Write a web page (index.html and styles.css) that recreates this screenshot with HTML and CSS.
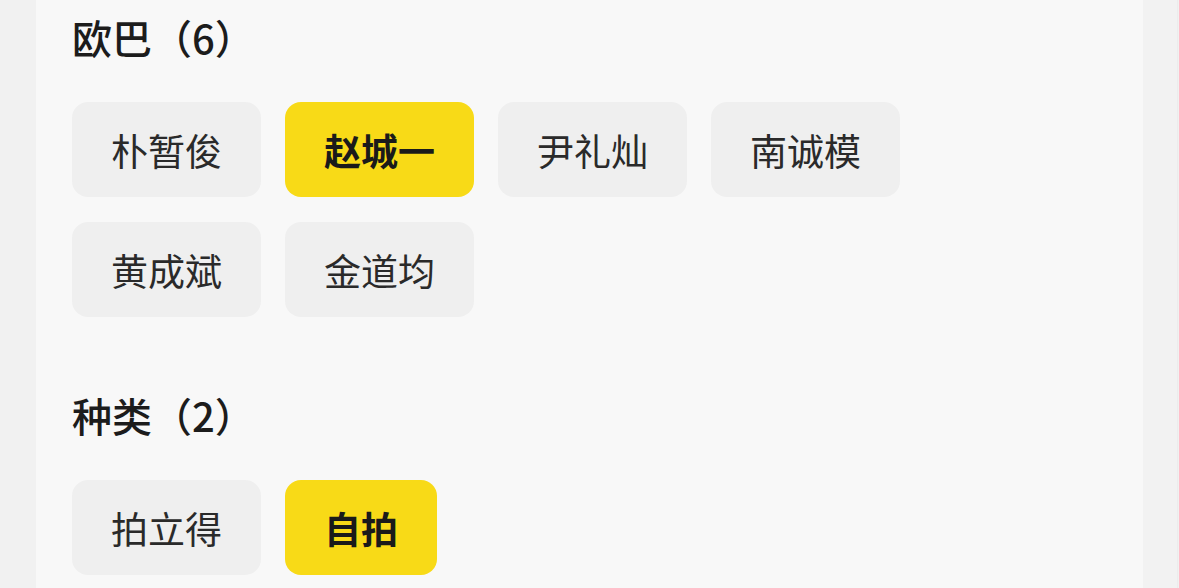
FILE: index.html
```html
<!DOCTYPE html>
<html lang="zh">
<head>
<meta charset="utf-8">
<link rel="stylesheet" href="styles.css">
</head>
<body>
<div class="page">
  <div class="panel">
    <section class="group">
      <h2 class="title">欧巴（6）</h2>
      <div class="chips">
        <span class="chip">朴暂俊</span>
        <span class="chip active">赵城一</span>
        <span class="chip">尹礼灿</span>
        <span class="chip">南诚模</span>
        <span class="chip">黄成斌</span>
        <span class="chip">金道均</span>
      </div>
    </section>
    <section class="group second">
      <h2 class="title">种类（2）</h2>
      <div class="chips">
        <span class="chip">拍立得</span>
        <span class="chip active">自拍</span>
      </div>
    </section>
  </div>
  <div class="edge"></div>
</div>
</body>
</html>
```
FILE: styles.css
```css
html, body {
  margin: 0;
  padding: 0;
  height: 100%;
}
body {
  background: #f1f1f1;
  font-family: "Noto Sans CJK SC", "Noto Sans", sans-serif;
  color: #1c1c1c;
  overflow: hidden;
}
.page {
  display: flex;
  height: 588px;
  padding-left: 36px;
}
.panel {
  width: 1071px;
  background: #f8f8f8;
  padding-left: 36px;
  padding-top: 9px;
}
.edge {
  width: 34px;
  background: #f2f2f2;
  border-right: 1px solid #ececec;
}
.group.second {
  margin-top: 70px;
}
.title {
  margin: 0;
  font-size: 40px;
  line-height: 56px;
  font-weight: 500;
  color: #1c1c1c;
  letter-spacing: 0;
}
.chips {
  margin-top: 37px;
  display: flex;
  flex-wrap: wrap;
  gap: 25px 24px;
  width: 860px;
}
.chip {
  height: 95px;
  padding: 0 39px;
  display: flex;
  align-items: center;
  justify-content: center;
  background: #efefef;
  border-radius: 16px;
  font-size: 37px;
  font-weight: 400;
  color: #2a2a2a;
}
.chip.active {
  background: #f8da17;
  font-weight: 700;
  color: #1a1a1a;
}
```
